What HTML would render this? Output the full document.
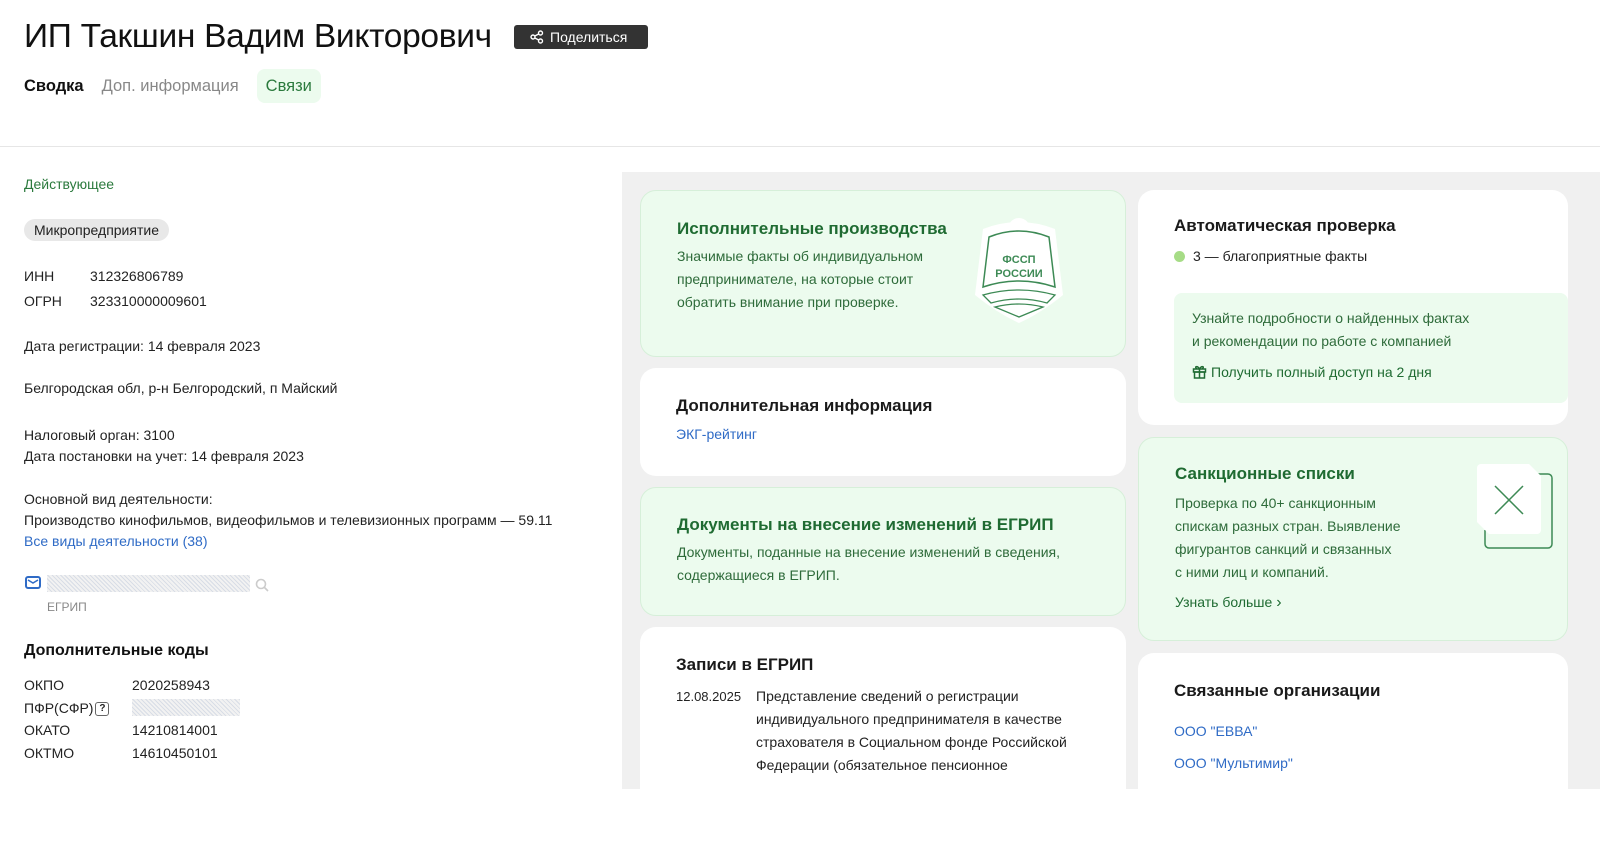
<!DOCTYPE html>
<html><head><meta charset="utf-8"><style>
*{box-sizing:border-box;margin:0;padding:0}
body{width:1600px;height:789px;overflow:hidden;background:#fff;font-family:"Liberation Sans","DejaVu Sans",sans-serif;color:#1a1a1a;position:relative}
.abs{position:absolute}
h1{position:absolute;left:24px;top:18px;font-size:33.5px;font-weight:400;letter-spacing:-0.3px;color:#111}
.share{position:absolute;left:514px;top:25px;width:134px;height:24px;background:#333;border-radius:3px;color:#fff;font-size:14px;line-height:24px;padding-left:36px}
.tabs{position:absolute;top:77px;left:24px;font-size:16.5px}
.hr{position:absolute;left:0;right:0;top:146px;border-top:1px solid #e6e6e6}
.l{position:absolute;left:24px;font-size:14px;color:#222}
.gray{position:absolute;left:622px;top:172px;right:0;bottom:0;background:#f0f0f0}
.card{position:absolute;background:#fff;border-radius:16px;padding:0 36px}
.g{background:#ecfbee;border:1px solid #d6efd9}
.card h3{font-size:17px;font-weight:700;color:#1a1a1a;margin-top:28px}
.g h3{color:#1f6b32}
.txt{font-size:14px;line-height:23px;color:#2e6b3a}
a{color:#2f6bc6;text-decoration:none}
.blur{background:repeating-linear-gradient(45deg,#d8dde6 0 1px,#f2f2f2 1px 3px)}
</style></head><body>
<h1>ИП Такшин Вадим Викторович</h1>
<div class="share"><svg class="abs" style="left:16px;top:5px" width="14" height="14" viewBox="0 0 14 14" fill="none" stroke="#fff" stroke-width="1.4"><circle cx="10.5" cy="3" r="2"/><circle cx="3" cy="7" r="2"/><circle cx="10.5" cy="11" r="2"/><path d="M4.8 6 8.7 4M4.8 8l3.9 2"/></svg>Поделиться</div>
<div class="tabs"><span style="font-weight:700;color:#111">Сводка</span><span style="color:#888;margin-left:18px">Доп. информация</span><span style="color:#2b7a3d;background:#ecfbee;border-radius:8px;padding:8px 9px;margin-left:18px">Связи</span></div>
<div class="hr"></div>

<div class="l" style="top:176px;color:#2b7a3d">Действующее</div>
<div class="l" style="top:219px;background:#e8e8e8;border-radius:12px;padding:3px 10px;font-size:14px">Микропредприятие</div>
<div class="l" style="top:268px">ИНН<span class="abs" style="left:66px;white-space:nowrap">312326806789</span></div>
<div class="l" style="top:293px">ОГРН<span class="abs" style="left:66px;white-space:nowrap">323310000009601</span></div>
<div class="l" style="top:338px">Дата регистрации: 14 февраля 2023</div>
<div class="l" style="top:380px">Белгородская обл, р-н Белгородский, п Майский</div>
<div class="l" style="top:425px;line-height:21px">Налоговый орган: 3100<br>Дата постановки на учет: 14 февраля 2023</div>
<div class="l" style="top:489px;line-height:21px;width:580px">Основной вид деятельности:<br>Производство кинофильмов, видеофильмов и телевизионных программ — 59.11<br><a>Все виды деятельности (38)</a></div>
<svg class="abs" style="left:25px;top:576px" width="16" height="13" viewBox="0 0 16 13"><rect x="1" y="1" width="14" height="11" rx="2" fill="none" stroke="#2f6bc6" stroke-width="2"/><path d="M3 4l5 3 5-3" fill="none" stroke="#2f6bc6" stroke-width="1.5"/></svg>
<div class="abs blur" style="left:47px;top:575px;width:203px;height:17px"></div>
<svg class="abs" style="left:255px;top:578px" width="14" height="14" viewBox="0 0 14 14" fill="none" stroke="#ccc" stroke-width="1.6"><circle cx="6" cy="6" r="4.5"/><path d="M9.5 9.5 13 13"/></svg>
<div class="abs" style="left:47px;top:600px;font-size:12px;color:#888">ЕГРИП</div>
<div class="l" style="top:642px;font-size:16px;font-weight:700;color:#111">Дополнительные коды</div>
<div class="l" style="top:674px;line-height:22.5px">ОКПО<br>ПФР(СФР)<span style="display:inline-block;width:14px;height:14px;border:1.5px solid #666;border-radius:3px;font-size:10px;text-align:center;line-height:11px;font-weight:700;vertical-align:middle;margin-left:2px">?</span><br>ОКАТО<br>ОКТМО</div>
<div class="l" style="top:674px;left:132px;line-height:22.5px">2020258943<br><span class="blur" style="display:inline-block;width:108px;height:17px;vertical-align:-3px"></span><br>14210814001<br>14610450101</div>

<div class="gray"></div>
<div class="card g" style="left:640px;top:190px;width:486px;height:167px">
<h3 style="margin-top:28px">Исполнительные производства</h3>
<div class="txt" style="margin-top:6px">Значимые факты об индивидуальном<br>предпринимателе, на которые стоит<br>обратить внимание при проверке.</div>
<svg class="abs" style="left:330px;top:24px" width="96" height="110" viewBox="0 0 96 110"><path d="M12 14 Q48 0 84 14 L92 80 Q70 98 48 108 Q26 98 4 80Z" fill="#fff"/><circle cx="48" cy="14" r="11" fill="#fff"/><path d="M18 22 Q48 10 78 22 L84 72 Q48 60 12 72Z" fill="none" stroke="#3d8a55" stroke-width="1.5"/><path d="M12 80 Q48 70 84 80 L76 88 Q48 80 20 88Z M24 92 Q48 86 72 92 L48 102Z" fill="none" stroke="#3d8a55" stroke-width="1.3"/><text x="48" y="48" text-anchor="middle" font-size="11" font-weight="700" fill="#3d8a55" font-family="Liberation Sans">ФССП</text><text x="48" y="62" text-anchor="middle" font-size="11" font-weight="700" fill="#3d8a55" font-family="Liberation Sans">РОССИИ</text></svg>
</div>
<div class="card" style="left:640px;top:368px;width:486px;height:108px">
<h3 style="margin-top:28px">Дополнительная информация</h3>
<div style="font-size:14px;margin-top:10px"><a>ЭКГ-рейтинг</a></div>
</div>
<div class="card g" style="left:640px;top:487px;width:486px;height:129px">
<h3 style="margin-top:27px">Документы на внесение изменений в ЕГРИП</h3>
<div class="txt" style="margin-top:6px">Документы, поданные на внесение изменений в сведения,<br>содержащиеся в ЕГРИП.</div>
</div>
<div class="card" style="left:640px;top:627px;width:486px;height:200px">
<h3 style="margin-top:28px">Записи в ЕГРИП</h3>
<div class="abs" style="left:36px;top:62px;font-size:13px;color:#222">12.08.2025</div>
<div class="abs" style="left:116px;top:58px;font-size:14px;line-height:23px;color:#222">Представление сведений о регистрации<br>индивидуального предпринимателя в качестве<br>страхователя в Социальном фонде Российской<br>Федерации (обязательное пенсионное</div>
</div>

<div class="card" style="left:1138px;top:190px;width:430px;height:235px">
<h3 style="margin-top:26px">Автоматическая проверка</h3>
<div style="font-size:14px;margin-top:12px;color:#222"><span style="display:inline-block;width:11px;height:11px;border-radius:50%;background:#a6dc86;margin-right:8px;vertical-align:-1px"></span>3 — благоприятные факты</div>
<div class="abs" style="left:36px;top:103px;width:394px;height:110px;background:#ecfbee;border-radius:8px;padding:14px 18px;font-size:14px;line-height:23px;color:#2e6b3a">Узнайте подробности о найденных фактах<br>и рекомендации по работе с компанией<div style="margin-top:8px;color:#1f6b32"><svg width="15" height="15" viewBox="0 0 15 15" fill="none" stroke="#1f6b32" stroke-width="1.5" style="vertical-align:-2px;margin-right:4px"><rect x="1.5" y="5" width="12" height="3"/><rect x="2.5" y="8" width="10" height="6"/><path d="M7.5 5v9M7.5 5C5 1 2 3 5 5M7.5 5C10 1 13 3 10 5"/></svg>Получить полный доступ на 2 дня</div></div>
</div>
<div class="card g" style="left:1138px;top:437px;width:430px;height:204px">
<h3 style="margin-top:26px">Санкционные списки</h3>
<div class="txt" style="margin-top:8px">Проверка по 40+ санкционным<br>спискам разных стран. Выявление<br>фигурантов санкций и связанных<br>с ними лиц и компаний.</div>
<div style="font-size:14px;color:#1f6b32;margin-top:10px">Узнать больше <span style="font-size:16px">›</span></div>
<svg class="abs" style="left:332px;top:20px" width="100" height="100" viewBox="0 0 100 100"><path d="M62 16h15a4 4 0 0 1 4 4v66a4 4 0 0 1-4 4H18a4 4 0 0 1-4-4V72" fill="none" stroke="#3d8a55" stroke-width="1.5"/><path d="M12 6h46l12 12v54a4 4 0 0 1-4 4H18L6 64V10a4 4 0 0 1 4-4z" fill="#fff"/><path d="M24 28l28 28M52 28 24 56" stroke="#3d8a55" stroke-width="1.5"/></svg>
</div>
<div class="card" style="left:1138px;top:653px;width:430px;height:200px">
<h3 style="margin-top:28px">Связанные организации</h3>
<div style="font-size:14px;margin-top:14px;line-height:32px"><a>ООО "ЕВВА"</a><br><a>ООО "Мультимир"</a></div>
</div>
</body></html>
